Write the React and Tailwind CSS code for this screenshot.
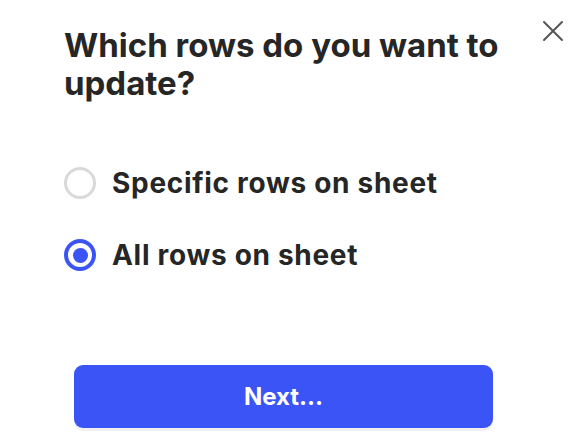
import React, { useState } from 'react';

export default function App() {
  const [choice, setChoice] = useState('all');
  const options = [
    { id: 'specific', label: 'Specific rows on sheet' },
    { id: 'all', label: 'All rows on sheet' },
  ];

  return (
    <div className="relative w-[582px] h-[444px] bg-white text-[#262626] font-['Inter',sans-serif]">
      <button className="absolute right-[18px] top-[20px] text-[#555]">
        <svg width="22" height="22" viewBox="0 0 22 22" fill="none" stroke="currentColor" strokeWidth="2" strokeLinecap="round">
          <path d="M2 2L20 20M20 2L2 20" />
        </svg>
      </button>

      <div className="pl-[64px] pr-[60px] pt-[26px]">
        <h1 className="text-[33px] leading-[38px] font-bold">Which rows do you want to update?</h1>

        <div className="mt-[65px] flex flex-col gap-[40px]">
          {options.map((o) => (
            <label key={o.id} className="flex items-center gap-[16px] cursor-pointer" onClick={() => setChoice(o.id)}>
              {choice === o.id ? (
                <span className="h-[32px] w-[32px] rounded-full border-[4px] border-[#3a54f5] flex items-center justify-center">
                  <span className="h-[15px] w-[15px] rounded-full bg-[#3a54f5]" />
                </span>
              ) : (
                <span className="h-[32px] w-[32px] rounded-full border-[3px] border-[#d9d9d9]" />
              )}
              <span className="text-[28px] leading-[32px] font-bold tracking-[0.7px]">{o.label}</span>
            </label>
          ))}
        </div>
      </div>

      <div className="px-[74px] mt-[94px] pr-[89px]">
        <button className="w-full h-[63px] rounded-[9px] bg-[#3a54f5] text-white text-[24px] font-bold shadow-[0_3px_0_rgba(0,0,0,0.06)]">
          Next...
        </button>
      </div>
    </div>
  );
}
